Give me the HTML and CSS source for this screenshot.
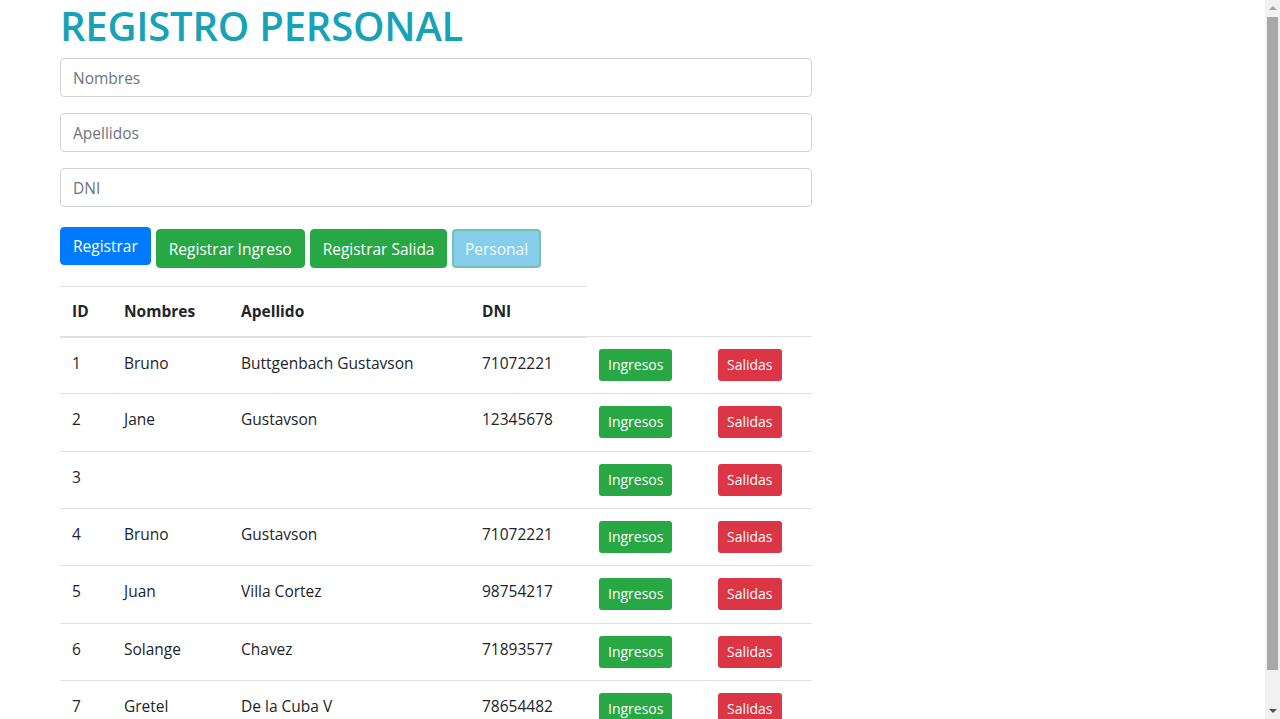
FILE: index.html
```html
<!DOCTYPE html>
<html lang="es">
<head>
<meta charset="utf-8">
<title>Registro Personal</title>
<link rel="stylesheet" href="styles.css">
</head>
<body>
<div class="container">
  <h1 class="title">REGISTRO PERSONAL</h1>
  <form class="reg-form">
    <div class="form-group"><input class="form-control" type="text" placeholder="Nombres"></div>
    <div class="form-group"><input class="form-control" type="text" placeholder="Apellidos"></div>
    <div class="form-group"><input class="form-control" type="text" placeholder="DNI"></div>
    <div class="actions">
      <button type="button" class="btn btn-primary">Registrar</button>
      <button type="button" class="btn btn-success btn-low">Registrar Ingreso</button>
      <button type="button" class="btn btn-success btn-low">Registrar Salida</button>
      <button type="button" class="btn btn-sky btn-low">Personal</button>
    </div>
  </form>
  <table class="table">
    <colgroup>
      <col class="c-id"><col class="c-nom"><col class="c-ape"><col class="c-dni"><col class="c-ing"><col class="c-sal">
    </colgroup>
    <thead>
      <tr><th>ID</th><th>Nombres</th><th>Apellido</th><th>DNI</th></tr>
    </thead>
    <tbody>
      <tr><td>1</td><td>Bruno</td><td>Buttgenbach Gustavson</td><td>71072221</td><td><button class="btn-sm btn-success">Ingresos</button></td><td><button class="btn-sm btn-danger">Salidas</button></td></tr>
      <tr><td>2</td><td>Jane</td><td>Gustavson</td><td>12345678</td><td><button class="btn-sm btn-success">Ingresos</button></td><td><button class="btn-sm btn-danger">Salidas</button></td></tr>
      <tr><td>3</td><td></td><td></td><td></td><td><button class="btn-sm btn-success">Ingresos</button></td><td><button class="btn-sm btn-danger">Salidas</button></td></tr>
      <tr><td>4</td><td>Bruno</td><td>Gustavson</td><td>71072221</td><td><button class="btn-sm btn-success">Ingresos</button></td><td><button class="btn-sm btn-danger">Salidas</button></td></tr>
      <tr><td>5</td><td>Juan</td><td>Villa Cortez</td><td>98754217</td><td><button class="btn-sm btn-success">Ingresos</button></td><td><button class="btn-sm btn-danger">Salidas</button></td></tr>
      <tr><td>6</td><td>Solange</td><td>Chavez</td><td>71893577</td><td><button class="btn-sm btn-success">Ingresos</button></td><td><button class="btn-sm btn-danger">Salidas</button></td></tr>
      <tr><td>7</td><td>Gretel</td><td>De la Cuba V</td><td>78654482</td><td><button class="btn-sm btn-success">Ingresos</button></td><td><button class="btn-sm btn-danger">Salidas</button></td></tr>
    </tbody>
  </table>
</div>
<div class="scrollbar" aria-hidden="true">
  <span class="sb-arrow sb-up"></span>
  <span class="sb-thumb"></span>
  <span class="sb-arrow sb-down"></span>
</div>
</body>
</html>
```

FILE: styles.css
```css
* { box-sizing: border-box; }
html, body { margin: 0; padding: 0; }
body {
  font-family: "Open Sans", "Noto Sans", sans-serif;
  font-size: 15.5px;
  line-height: 1.5;
  color: #212529;
  background: #fff;
}
.container {
  width: 752px;
  margin-left: 60px;
  padding-top: 2px;
}
.title {
  margin: 0 0 8px 0;
  font-size: 40px;
  font-weight: 600;
  line-height: 48px;
  color: #17a2b8;
  letter-spacing: -0.2px;
}
.reg-form { margin: 0; }
.form-group { margin-bottom: 16px; }
.form-control {
  display: block;
  width: 100%;
  height: 39px;
  padding: 6px 12px;
  font-family: inherit;
  font-size: 15.5px;
  line-height: 1.5;
  color: #495057;
  background: #fff;
  border: 1px solid #ced4da;
  border-radius: 4px;
}
.form-control::placeholder { color: #6c757d; opacity: 1; }
.actions {
  display: flex;
  align-items: flex-start;
  gap: 4px;
  padding-top: 4px;
}
.btn {
  display: inline-block;
  height: 38px;
  padding: 6px 12px;
  font-family: inherit;
  font-size: 15.5px;
  line-height: 24px;
  color: #fff;
  border: 1px solid transparent;
  border-radius: 4px;
  cursor: pointer;
}
.btn-low { margin-top: 2px; margin-left: 1px; height: 39px; }
.btn-primary { background: #007bff; border-color: #007bff; }
.btn-success { background: #28a745; border-color: #28a745; color: #fff; }
.btn-danger { background: #dc3545; border-color: #dc3545; color: #fff; }
.btn-sky {
  background: #87ceeb;
  border: 2px solid #74c4ad;
  color: #f2fafd;
  padding: 6px 10.5px;
}
.table {
  width: 752px;
  margin-top: 18px;
  margin-bottom: 16px;
  border-collapse: collapse;
  table-layout: fixed;
}
.c-id { width: 52px; }
.c-nom { width: 117px; }
.c-ape { width: 241px; }
.c-dni { width: 117px; }
.c-ing { width: 119px; }
.c-sal { width: 106px; }
.table th, .table td {
  padding: 12px;
  text-align: left;
  vertical-align: top;
  border-top: 1px solid #dee2e6;
  white-space: nowrap;
}
.table th {
  height: 50px;
  padding-top: 13px;
  font-weight: 700;
  border-bottom: 2px solid #dee2e6;
}
.table td { height: 57.33px; padding-top: 14px; }
.btn-sm {
  display: inline-block;
  margin-top: -2px;
  padding: 5px 8px;
  height: 32px;
  font-family: inherit;
  font-size: 14px;
  line-height: 20px;
  border: 1px solid transparent;
  border-radius: 3px;
  cursor: pointer;
}

/* window scrollbar (drawn over the page's right edge) */
.scrollbar {
  position: fixed;
  top: 0;
  right: 0;
  width: 15px;
  height: 100vh;
  background: #f1f1f1;
}
.sb-thumb {
  position: absolute;
  top: 17px;
  left: 2px;
  width: 11px;
  height: 653px;
  background: #a8a8a8;
}
.sb-arrow {
  position: absolute;
  left: 3.5px;
  width: 0;
  height: 0;
  border-left: 4px solid transparent;
  border-right: 4px solid transparent;
}
.sb-up {
  top: 6px;
  border-bottom: 4px solid #a3a3a3;
}
.sb-down {
  bottom: 6px;
  border-top: 4px solid #505050;
}
```
